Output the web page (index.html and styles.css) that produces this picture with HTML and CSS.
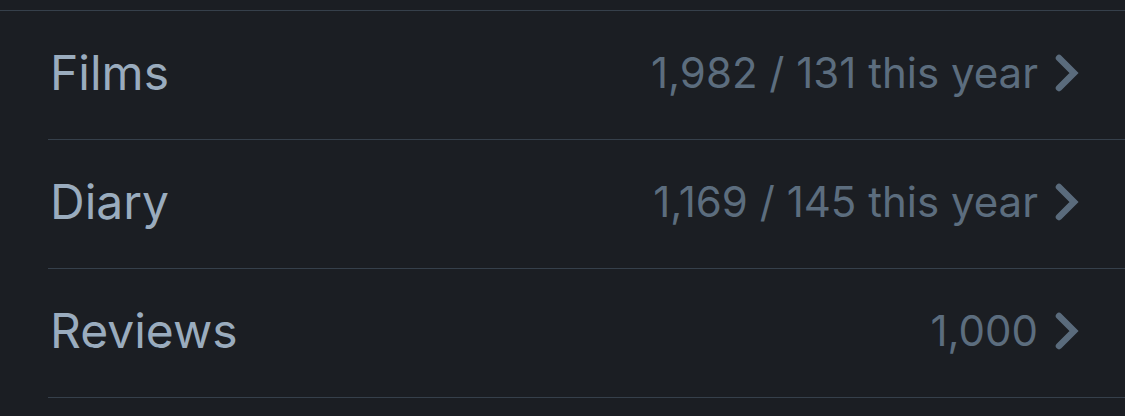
FILE: index.html
```html
<!DOCTYPE html>
<html>
<head>
<meta charset="utf-8">
<link rel="stylesheet" href="styles.css">
</head>
<body>
<div class="list">
  <div class="row">
    <span class="label">Films</span>
    <span class="value">1,982 / 131 this year</span>
    <svg class="chev" viewBox="0 0 26 38" width="26" height="38"><polyline points="5,4 20,19 5,34" fill="none" stroke="#5a6b7c" stroke-width="6.5" stroke-linecap="round" stroke-linejoin="miter"/></svg>
  </div>
  <div class="row">
    <span class="label">Diary</span>
    <span class="value">1,169 / 145 this year</span>
    <svg class="chev" viewBox="0 0 26 38" width="26" height="38"><polyline points="5,4 20,19 5,34" fill="none" stroke="#5a6b7c" stroke-width="6.5" stroke-linecap="round" stroke-linejoin="miter"/></svg>
  </div>
  <div class="row">
    <span class="label">Reviews</span>
    <span class="value">1,000</span>
    <svg class="chev" viewBox="0 0 26 38" width="26" height="38"><polyline points="5,4 20,19 5,34" fill="none" stroke="#5a6b7c" stroke-width="6.5" stroke-linecap="round" stroke-linejoin="miter"/></svg>
  </div>
</div>
</body>
</html>
```
FILE: styles.css
```css
html, body {
  margin: 0;
  padding: 0;
  background: #1b1e23;
  height: 100%;
  overflow: hidden;
}
.list {
  margin-top: 10px;
  border-top: 1px solid #36404b;
  padding-left: 48px;
}
.row {
  display: flex;
  align-items: center;
  height: 128px;
  border-bottom: 1px solid #36404b;
  padding: 0 45px 0 2px;
  font-family: Inter, "Noto Sans", sans-serif;
}
.label {
  flex: 1;
  font-size: 48px;
  color: #9aacbe;
  margin-top: -6px;
}
.value {
  font-size: 42px;
  color: #5c6d7e;
  margin-top: -6px;
  margin-right: 16px;
}
.chev {
  display: block;
  margin-top: -4px;
}
```
